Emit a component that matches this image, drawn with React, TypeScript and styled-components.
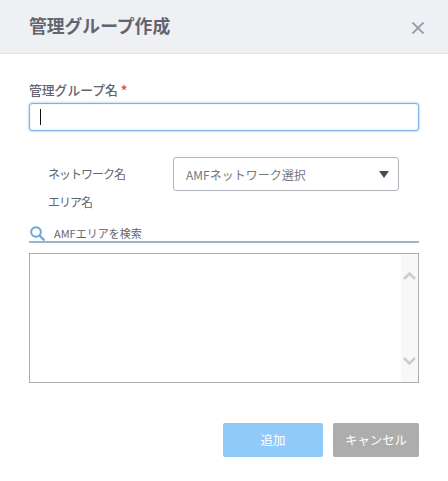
import React from 'react'
import styled, { createGlobalStyle } from 'styled-components'

const GlobalStyle = createGlobalStyle`
  html, body {
    margin: 0;
    padding: 0;
    background: #fff;
  }
  body {
    font-family: "Noto Sans CJK JP", "Noto Sans", sans-serif;
  }
`
const Dialog = styled.div`
  width: 448px;
  height: 481px;
  display: flex;
  flex-direction: column;
  background: #fff;
  overflow: hidden;
`
const Header = styled.div`
  height: 53px;
  flex: none;
  display: flex;
  align-items: center;
  justify-content: space-between;
  padding: 0 23px 0 29px;
  background: #eff0f4;
  border-bottom: 1px solid #e0e1e5;
`
const Title = styled.h2`
  margin: 0 0 3px;
  font-size: 17.8px;
  line-height: 24px;
  font-weight: 700;
  color: #62656f;
`
const CloseButton = styled.button`
  display: flex;
  padding: 0;
  margin-top: 3px;
  border: none;
  background: none;
`
const Body = styled.div`
  flex: 1;
  display: flex;
  flex-direction: column;
  padding: 26px 29px 0;
`
const FieldLabel = styled.label`
  height: 20px;
  font-size: 12.8px;
  line-height: 20px;
  font-weight: 500;
  color: #62656f;
`
const Required = styled.span`
  margin-left: 3px;
  color: #e5534b;
  font-weight: 700;
`
const NameInput = styled.div`
  box-sizing: border-box;
  width: 390px;
  height: 28px;
  margin-top: 3px;
  display: flex;
  align-items: center;
  padding-left: 10px;
  background: #fff;
  border: 1px solid #7fb2e0;
  border-radius: 3px;
  box-shadow: 0 0 3px #8fc0ea, inset 0 0 1px #8fc0ea;
`
const Caret = styled.span`
  width: 1px;
  height: 16px;
  background: #111;
`
const NetworkRow = styled.div`
  display: flex;
  align-items: center;
  margin-top: 26px;
  padding-left: 19px;
`
const RowLabel = styled.span`
  width: 125px;
  font-size: 12px;
  line-height: 18px;
  letter-spacing: -1px;
  color: #62656f;
`
const Select = styled.div`
  box-sizing: border-box;
  width: 226px;
  height: 34px;
  display: flex;
  align-items: center;
  justify-content: space-between;
  padding: 0 9px 0 12px;
  border: 1px solid #b3b5bc;
  border-radius: 3px;
  font-size: 12px;
  color: #74777f;
`
const Arrow = styled.span`
  width: 0;
  height: 0;
  border-left: 5px solid transparent;
  border-right: 5px solid transparent;
  border-top: 7px solid #4a4c54;
`
const AreaLabel = styled(RowLabel)`
  display: block;
  margin: 2px 0 0 19px;
  height: 18px;
`
const SearchRow = styled.div`
  box-sizing: border-box;
  width: 390px;
  height: 20px;
  margin-top: 12px;
  display: flex;
  align-items: flex-end;
  gap: 9px;
  padding-left: 1px;
  border-bottom: 2px solid #9bb5cc;
`
const SearchText = styled.span`
  font-size: 11px;
  line-height: 16px;
  color: #62656f;
`
const ListBox = styled.div`
  box-sizing: border-box;
  width: 390px;
  height: 130px;
  margin-top: 10px;
  display: flex;
  justify-content: flex-end;
  border: 1px solid #aeaeae;
`
const ScrollTrack = styled.div`
  width: 17px;
  display: flex;
  flex-direction: column;
  justify-content: space-between;
  align-items: center;
  padding: 17px 0 16px;
  background: #f8f8f8;
`
const Footer = styled.div`
  width: 390px;
  display: flex;
  justify-content: flex-end;
  gap: 10px;
  margin-top: 40px;
`
const ActionButton = styled.button<{ $bg: string; $width: number }>`
  width: ${({ $width }) => $width}px;
  height: 34px;
  padding: 0;
  border: none;
  border-radius: 2px;
  background: ${({ $bg }) => $bg};
  color: #fff;
  font-family: inherit;
  font-size: 12.4px;
`

const Chevron = ({ up }: { up?: boolean }) => (
  <svg width="13" height="9" viewBox="0 0 13 9">
    <path
      d={up ? 'M1 8L6.5 2.5L12 8' : 'M1 1L6.5 6.5L12 1'}
      fill="none"
      stroke="#cccccc"
      strokeWidth="2.5"
    />
  </svg>
)

export default function App() {
  return (
    <Dialog>
      <GlobalStyle />
      <Header>
        <Title>管理グループ作成</Title>
        <CloseButton>
          <svg width="14" height="14" viewBox="0 0 14 14">
            <path d="M1.5 1.5L12.5 12.5M12.5 1.5L1.5 12.5" stroke="#9a9eab" strokeWidth="1.8" fill="none" />
          </svg>
        </CloseButton>
      </Header>
      <Body>
        <FieldLabel>
          管理グループ名<Required>*</Required>
        </FieldLabel>
        <NameInput>
          <Caret />
        </NameInput>
        <NetworkRow>
          <RowLabel>ネットワーク名</RowLabel>
          <Select>
            AMFネットワーク選択
            <Arrow />
          </Select>
        </NetworkRow>
        <AreaLabel>エリア名</AreaLabel>
        <SearchRow>
          <svg width="15" height="15" viewBox="0 0 15 15">
            <circle cx="6" cy="6" r="4.8" fill="none" stroke="#6aa5dc" strokeWidth="2" />
            <path d="M9.5 9.5L14.5 14.5" stroke="#6aa5dc" strokeWidth="2.2" />
          </svg>
          <SearchText>AMFエリアを検索</SearchText>
        </SearchRow>
        <ListBox>
          <ScrollTrack>
            <Chevron up />
            <Chevron />
          </ScrollTrack>
        </ListBox>
        <Footer>
          <ActionButton $bg="#90caf9" $width={100}>追加</ActionButton>
          <ActionButton $bg="#adadad" $width={86}>キャンセル</ActionButton>
        </Footer>
      </Body>
    </Dialog>
  )
}
